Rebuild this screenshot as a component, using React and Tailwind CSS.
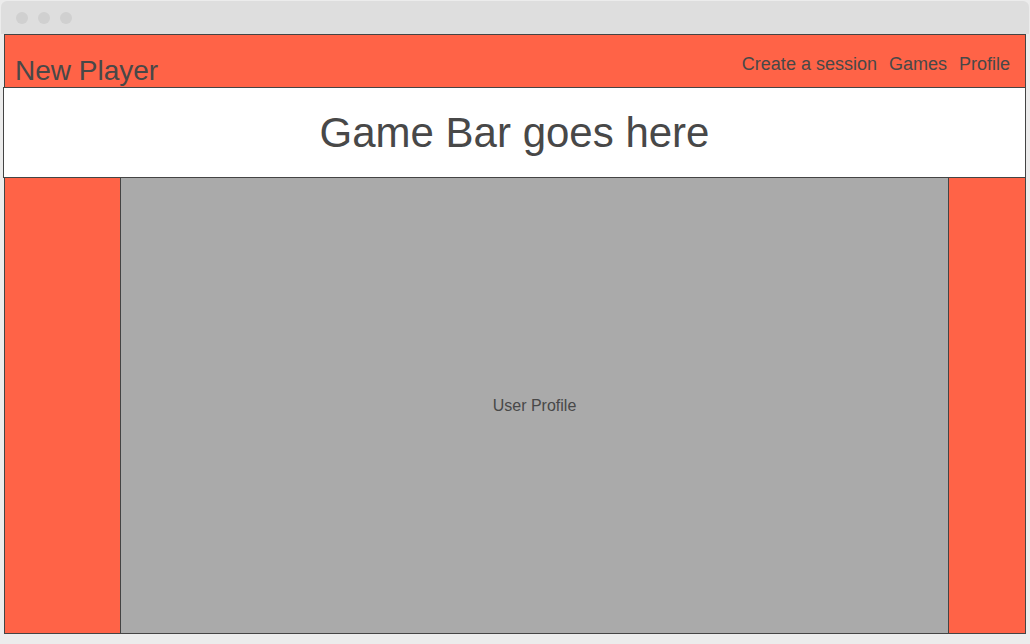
import React from "react";

const navLinks = ["Create a session", "Games", "Profile"];

const App = () => {
  return (
    <div className="w-[1030px] h-[644px] bg-[#ececec] px-[1px] pt-[1px] font-['Liberation_Sans',Arial,sans-serif] text-[#484848]">
      {/* window chrome */}
      <div className="h-[33px] bg-[#dedede] rounded-t-[6px] flex items-center gap-[10px] pl-[15px]">
        <span className="w-[12px] h-[12px] rounded-full bg-[#d0d0d0]" />
        <span className="w-[12px] h-[12px] rounded-full bg-[#d0d0d0]" />
        <span className="w-[12px] h-[12px] rounded-full bg-[#d0d0d0]" />
      </div>

      <div className="mx-[3px] border border-[#444] flex flex-col h-[600px]">
        <div className="h-[52px] bg-[#ff6347] flex justify-between pl-[10px] pr-[15px]">
          <div className="text-[28px] leading-none pt-[22px]">New Player</div>
          <ul className="flex gap-[12px] text-[18px] leading-none pt-[20px]">
            {navLinks.map((x) => (
              <li key={x}>{x}</li>
            ))}
          </ul>
        </div>

        <div className="-ml-[2px] -mr-[1px] h-[91px] bg-white border border-[#444] flex items-center justify-center">
          <span className="text-[42px] leading-none">Game Bar goes here</span>
        </div>

        <div className="flex flex-1">
          <div className="w-[116px] bg-[#ff6347] border-r border-[#444]" />
          <div className="w-[828px] bg-[#aaaaaa] border-r border-[#444] flex items-center justify-center text-[16px] pt-[1px]">
            User Profile
          </div>
          <div className="flex-1 bg-[#ff6347]" />
        </div>
      </div>
    </div>
  );
};

export default App;
